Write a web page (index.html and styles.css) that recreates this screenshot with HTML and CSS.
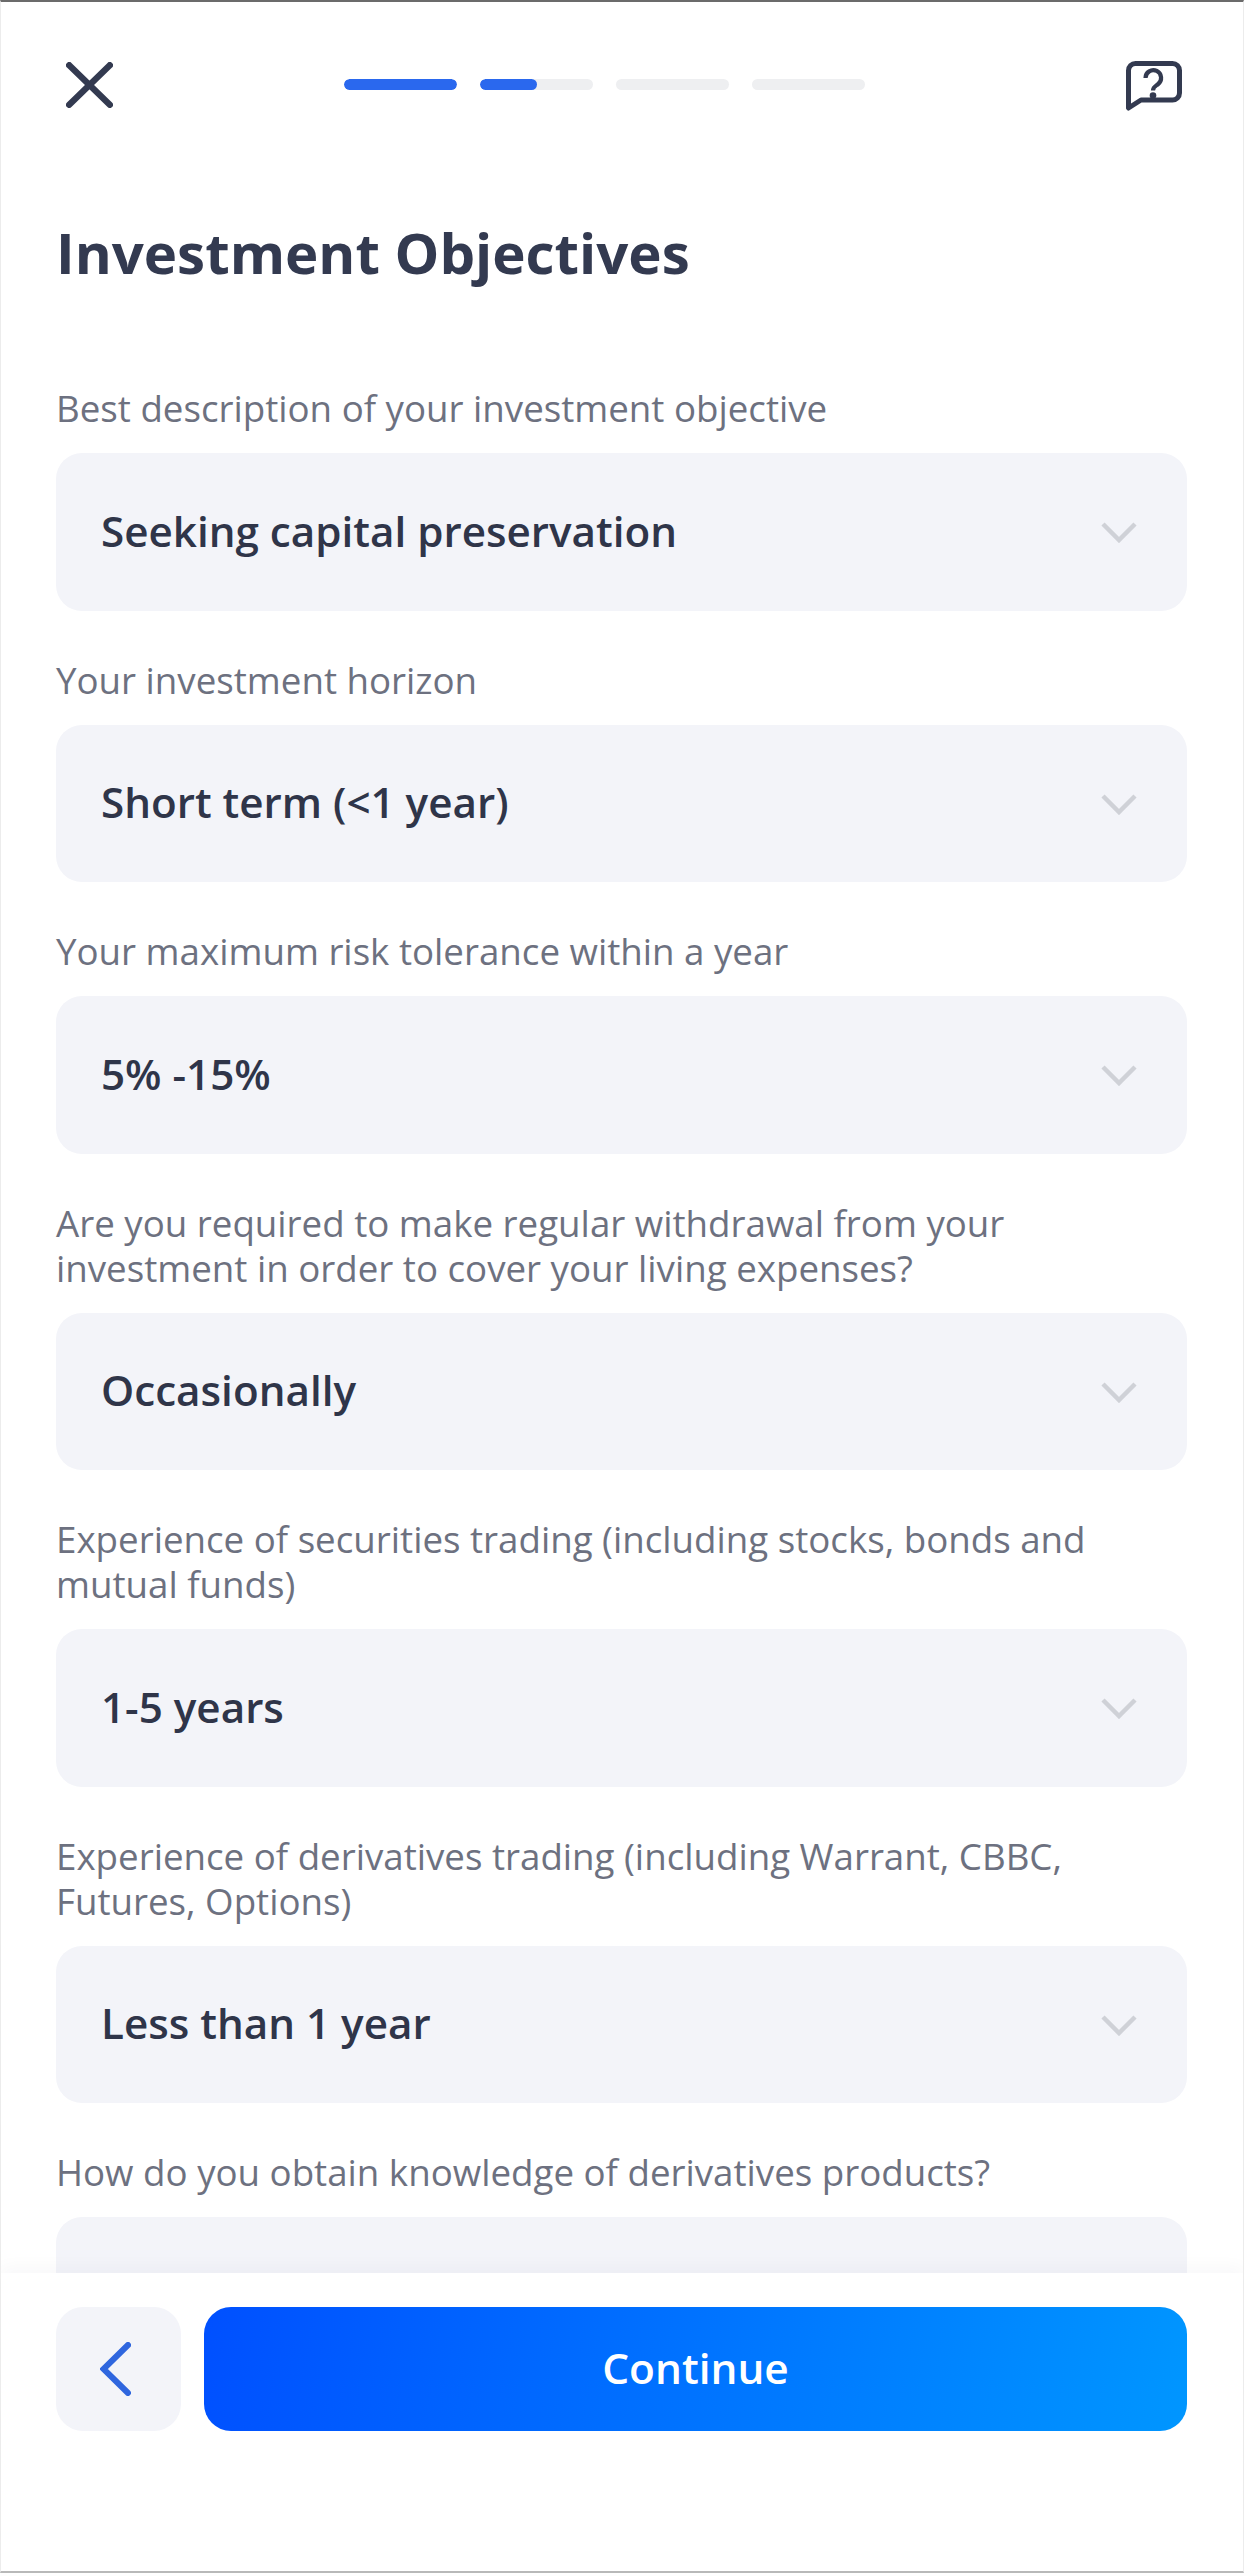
FILE: index.html
```html
<!DOCTYPE html>
<html lang="en">
<head>
<meta charset="utf-8">
<title>Investment Objectives</title>
<link rel="stylesheet" href="styles.css">
</head>
<body>
<div class="screen">
  <header class="topbar">
    <svg class="icon-close" viewBox="0 0 47 46" aria-hidden="true"><path d="M3.200 3.200 43.800 42.800M43.800 3.200 3.200 42.800"/></svg>
    <div class="steps">
      <div class="step"><div class="fill fill-full"></div></div>
      <div class="step"><div class="fill fill-half"></div></div>
      <div class="step"></div>
      <div class="step"></div>
    </div>
    <svg class="icon-help" viewBox="0 0 56 50" aria-hidden="true">
      <path class="outline" d="M2.500 9.500a7 7 0 0 1 7-7h37a7 7 0 0 1 7 7v22.500a7 7 0 0 1-7 7H15L2.500 47z"/>
      <path class="mark" d="M19.500 17a7.800 7.800 0 1 1 12.500 6.200c-2.700 2-5 2.900-5 6.300"/>
      <circle class="dot" cx="27" cy="34.500" r="3.300"/>
    </svg>
  </header>

  <main class="content">
    <h1 class="title">Investment Objectives</h1>

    <section class="field">
      <div class="label">Best description of your investment objective</div>
      <div class="select"><span class="value">Seeking capital preservation</span><svg class="chev" viewBox="0 0 36 21" aria-hidden="true"><path d="M2 2 18 18 34 2"/></svg></div>
    </section>
    <section class="field">
      <div class="label">Your investment horizon</div>
      <div class="select"><span class="value">Short term (&lt;1 year)</span><svg class="chev" viewBox="0 0 36 21" aria-hidden="true"><path d="M2 2 18 18 34 2"/></svg></div>
    </section>
    <section class="field">
      <div class="label">Your maximum risk tolerance within a year</div>
      <div class="select"><span class="value">5% -15%</span><svg class="chev" viewBox="0 0 36 21" aria-hidden="true"><path d="M2 2 18 18 34 2"/></svg></div>
    </section>
    <section class="field">
      <div class="label">Are you required to make regular withdrawal from your investment in order to cover your living expenses?</div>
      <div class="select"><span class="value">Occasionally</span><svg class="chev" viewBox="0 0 36 21" aria-hidden="true"><path d="M2 2 18 18 34 2"/></svg></div>
    </section>
    <section class="field">
      <div class="label">Experience of securities trading (including stocks, bonds and mutual funds)</div>
      <div class="select"><span class="value">1-5 years</span><svg class="chev" viewBox="0 0 36 21" aria-hidden="true"><path d="M2 2 18 18 34 2"/></svg></div>
    </section>
    <section class="field">
      <div class="label">Experience of derivatives trading (including Warrant, CBBC, Futures, Options)</div>
      <div class="select"><span class="value">Less than 1 year</span><svg class="chev" viewBox="0 0 36 21" aria-hidden="true"><path d="M2 2 18 18 34 2"/></svg></div>
    </section>
    <section class="field">
      <div class="label">How do you obtain knowledge of derivatives products?</div>
      <div class="select"></div>
    </section>
  </main>

  <footer class="footer">
    <div class="back">
      <svg class="icon-back" viewBox="0 0 31 54" aria-hidden="true"><path d="M28 3 3.500 27 28 51"/></svg>
    </div>
    <div class="continue"><span class="continue-text">Continue</span></div>
  </footer>
</div>
</body>
</html>
```

FILE: styles.css
```css
* { box-sizing: border-box; }

html, body {
  margin: 0;
  padding: 0;
  background: #fff;
}

.screen {
  width: 1244px;
  height: 2573px;
  display: flex;
  flex-direction: column;
  overflow: hidden;
  background: #fff;
  font-family: "Open Sans", "Noto Sans", sans-serif;
  border-top: 2px solid #6b6b6b;
  border-bottom: 2px solid #b9b9b9;
  border-left: 1px solid #ececec;
  border-right: 1px solid #ececec;
}

.topbar {
  flex: none;
  height: 213px;
  padding: 59px 61px 0 65px;
  display: flex;
  align-items: flex-start;
  justify-content: space-between;
}

.icon-close {
  width: 47px;
  height: 46px;
  margin-top: 1px;
  fill: none;
  stroke: #333a50;
  stroke-width: 6.400;
  stroke-linecap: round;
}

.steps {
  display: flex;
  gap: 23px;
  margin-top: 18px;
  margin-left: -30px;
}

.step {
  width: 113px;
  height: 11px;
  border-radius: 6px;
  background: #eeeff1;
  overflow: hidden;
}

.fill {
  height: 100%;
  border-radius: 6px;
  background: #2a68ee;
}
.fill-full { width: 100%; }
.fill-half { width: 50%; }

.icon-help {
  width: 56px;
  height: 50px;
}
.icon-help .outline {
  fill: none;
  stroke: #333a50;
  stroke-width: 5;
  stroke-linejoin: round;
  stroke-linecap: round;
}
.icon-help .mark {
  fill: none;
  stroke: #333a50;
  stroke-width: 4.200;
  stroke-linecap: butt;
}
.icon-help .dot { fill: #333a50; }

.content {
  flex: 1;
  min-height: 0;
  overflow: hidden;
  padding: 0 56px 0 55px;
}

.title {
  margin: 0 0 95px;
  font-size: 56.400px;
  line-height: 76px;
  font-weight: 700;
  color: #333a50;
}

.field { margin-bottom: 47px; }

.label {
  font-size: 36.700px;
  line-height: 45px;
  color: #6d7180;
  margin-bottom: 22px;
}

.select {
  height: 157.500px;
  border-radius: 26px;
  background: #f3f4f9;
  padding: 0 50px 0 45px;
  display: flex;
  align-items: center;
  justify-content: space-between;
  font-size: 42.200px;
  font-weight: 600;
  color: #2f3549;
}

.value { margin-bottom: 3px; }

.chev {
  width: 36px;
  height: 21px;
  margin-top: 2px;
  fill: none;
  stroke: #cfd1d7;
  stroke-width: 4.500;
}

.footer {
  flex: none;
  height: 298px;
  padding: 34px 56px 0 55px;
  display: flex;
  align-items: flex-start;
  gap: 23px;
  background: #fff;
  box-shadow: 0 -6px 16px rgba(40, 44, 60, 0.03);
  position: relative;
}

.back {
  width: 125px;
  height: 124px;
  border-radius: 27px;
  background: #f3f4f9;
  display: flex;
  align-items: center;
  justify-content: center;
}

.icon-back {
  width: 31px;
  height: 54px;
  margin-right: 7px;
  fill: none;
  stroke: #2f66de;
  stroke-width: 6;
  stroke-linecap: round;
}

.continue {
  flex: 1;
  height: 124px;
  border-radius: 27px;
  background: linear-gradient(100deg, #0050ff 0%, #0096ff 100%);
  color: #fff;
  font-size: 42.400px;
  font-weight: 600;
  display: flex;
  align-items: center;
  justify-content: center;
}

.continue-text { margin-bottom: 4px; }
```
